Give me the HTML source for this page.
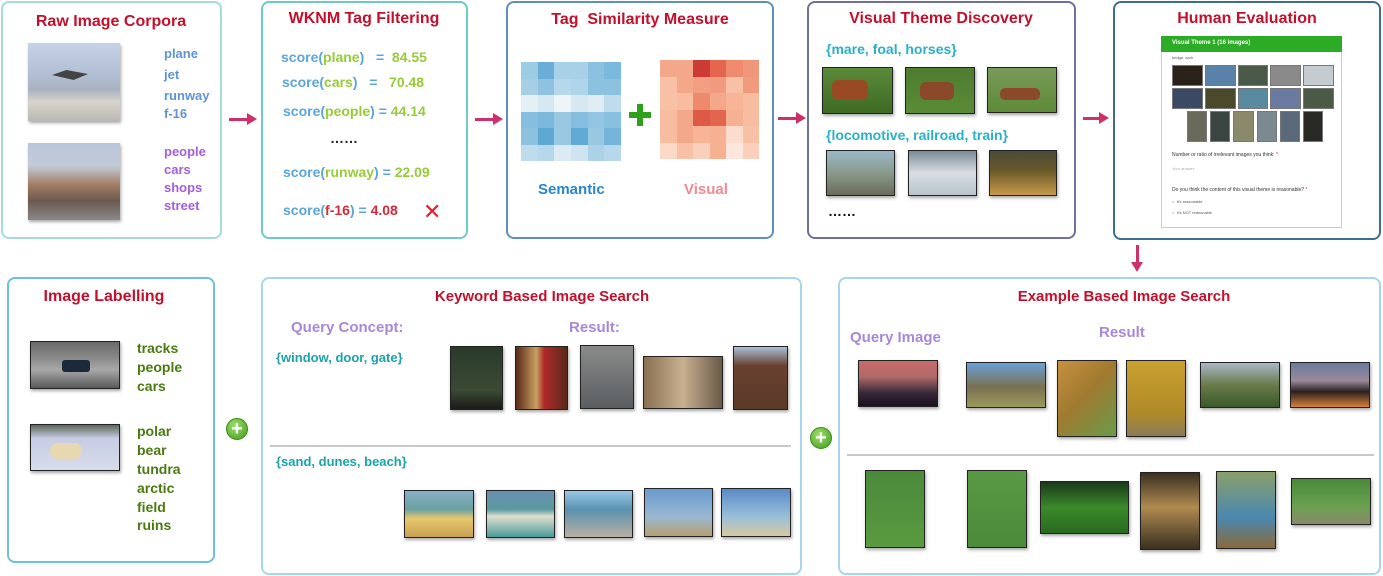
<!DOCTYPE html>
<html><head><meta charset="utf-8"><style>
*{margin:0;padding:0;box-sizing:border-box}
body{width:1383px;height:576px;background:#fff;position:relative;overflow:hidden;font-family:"Liberation Sans",sans-serif}
.a{position:absolute}
.box{position:absolute;border:2px solid #9dd6d0;border-radius:8px;background:#fff}
.t{position:absolute;color:#c4102c;font-weight:bold;font-size:16px;white-space:nowrap;transform:translateX(-50%)}
.tx{position:absolute;font-weight:bold;white-space:nowrap;font-size:13px}
.im{position:absolute;border:1px solid #222;box-shadow:1px 2px 3px rgba(0,0,0,.35)}
.grid{position:absolute;display:grid;grid-template-columns:repeat(6,1fr);grid-template-rows:repeat(6,1fr)}
.plus{position:absolute;width:22px;height:22px;border-radius:50%;background:radial-gradient(circle at 40% 35%,#9ee06a,#3f9a1c);color:#fff;font-weight:bold;font-size:20px;line-height:21px;text-align:center;border:1px solid #3b8a1a}
.arr{position:absolute;height:3px;background:#d0306a}
.arr:after{content:"";position:absolute;right:-8px;top:-5px;border-left:10px solid #d0306a;border-top:6.5px solid transparent;border-bottom:6.5px solid transparent}
.sb{color:#5aa5dc}.sg{color:#96cc38}
</style></head><body>

<!-- top boxes -->
<div class="box" style="left:1px;top:1px;width:221px;height:238px;border-color:#a6dbd6"></div>
<div class="box" style="left:261px;top:1px;width:207px;height:238px;border-color:#6fcac5"></div>
<div class="box" style="left:506px;top:1px;width:268px;height:238px;border-color:#5f8fc0"></div>
<div class="box" style="left:807px;top:1px;width:269px;height:238px;border-color:#6f6f9f"></div>
<div class="box" style="left:1113px;top:1px;width:268px;height:239px;border-color:#3f6d90"></div>

<div class="t" style="left:111px;top:13px">Raw Image Corpora</div>
<div class="t" style="left:364px;top:10px">WKNM Tag Filtering</div>
<div class="t" style="left:640px;top:11px">Tag &nbsp;Similarity Measure</div>
<div class="t" style="left:941px;top:10px">Visual Theme Discovery</div>
<div class="t" style="left:1247px;top:10px">Human Evaluation</div>

<!-- box1 -->
<div class="im" style="left:28px;top:43px;width:92px;height:78px;border:none;background:linear-gradient(#c6d2e6 0%,#b2bfd4 40%,#a9b2c0 60%,#d6d4cc 75%,#bab8b2 100%)"></div>
<div class="a" style="left:52px;top:70px;width:36px;height:10px;background:#444;clip-path:polygon(0 50%,40% 0,100% 40%,60% 100%)"></div>
<div class="im" style="left:28px;top:143px;width:92px;height:77px;border:none;background:linear-gradient(#b8c6dc 0%,#c2cad6 30%,#a27a62 55%,#6b5a50 75%,#888 100%)"></div>
<div class="tx" style="left:164px;top:46px;color:#5e93d8">plane</div>
<div class="tx" style="left:164px;top:67px;color:#5e93d8">jet</div>
<div class="tx" style="left:164px;top:88px;color:#5e93d8">runway</div>
<div class="tx" style="left:164px;top:106px;color:#5e93d8">f-16</div>
<div class="tx" style="left:164px;top:144px;color:#a25ee0">people</div>
<div class="tx" style="left:164px;top:162px;color:#a25ee0">cars</div>
<div class="tx" style="left:164px;top:180px;color:#a25ee0">shops</div>
<div class="tx" style="left:164px;top:198px;color:#a25ee0">street</div>

<div class="arr" style="left:229px;top:118px;width:20px"></div>
<div class="arr" style="left:475px;top:118px;width:20px"></div>
<div class="arr" style="left:778px;top:117px;width:20px"></div>
<div class="arr" style="left:1083px;top:117px;width:18px"></div>
<div class="a" style="left:1136px;top:245px;width:3px;height:20px;background:#d0306a"></div>
<div class="a" style="left:1131px;top:262px;border-top:10px solid #d0306a;border-left:6.5px solid transparent;border-right:6.5px solid transparent"></div>

<!-- box2 -->
<div class="tx" style="left:281px;top:49px;font-size:14px"><span class="sb">score(</span><span class="sg">plane</span><span class="sb">)</span> &nbsp; <span class="sb">=</span> &nbsp;<span class="sg">84.55</span></div>
<div class="tx" style="left:282px;top:74px;font-size:14px"><span class="sb">score(</span><span class="sg">cars</span><span class="sb">)</span> &nbsp; <span class="sb">=</span> &nbsp; <span class="sg">70.48</span></div>
<div class="tx" style="left:283px;top:103px;font-size:14px"><span class="sb">score(</span><span class="sg">people</span><span class="sb">)</span> <span class="sb">=</span> <span class="sg">44.14</span></div>
<div class="tx" style="left:330px;top:130px;font-size:14px;color:#222">……</div>
<div class="tx" style="left:283px;top:164px;font-size:14px"><span class="sb">score(</span><span class="sg">runway</span><span class="sb">)</span> <span class="sb">=</span> <span class="sg">22.09</span></div>
<div class="tx" style="left:283px;top:202px;font-size:14px"><span class="sb">score(</span><span style="color:#d42a3a">f-16</span><span class="sb">)</span> <span class="sb">=</span> <span style="color:#d42a3a">4.08</span></div>
<div class="tx" style="left:423px;top:199px;font-size:22px;color:#e41e2a;font-weight:normal">✕</div>

<!-- box3 -->
<div class="grid" style="left:521px;top:62px;width:100px;height:99px">
<div style="background:#9ccbe4"></div><div style="background:#6aaed8"></div><div style="background:#a8d0e6"></div><div style="background:#a8d0e6"></div><div style="background:#8ac0e0"></div><div style="background:#7ab8dc"></div>
<div style="background:#a6cfe6"></div><div style="background:#8ec2e0"></div><div style="background:#b6d8ea"></div><div style="background:#b0d4ea"></div><div style="background:#8cc2e0"></div><div style="background:#8cc2e0"></div>
<div style="background:#e4eff6"></div><div style="background:#d6e8f2"></div><div style="background:#eef5f9"></div><div style="background:#d6e8f2"></div><div style="background:#e0edf5"></div><div style="background:#bedcec"></div>
<div style="background:#86bedf"></div><div style="background:#7cb8dc"></div><div style="background:#98c8e2"></div><div style="background:#86bedf"></div><div style="background:#92c6e2"></div><div style="background:#88c0e0"></div>
<div style="background:#8cc2e0"></div><div style="background:#5ea8d4"></div><div style="background:#98c8e2"></div><div style="background:#62aad6"></div><div style="background:#98c8e2"></div><div style="background:#74b4da"></div>
<div style="background:#bedcec"></div><div style="background:#b6d8ea"></div><div style="background:#dceaf3"></div><div style="background:#cfe4f0"></div><div style="background:#acd2e8"></div><div style="background:#b6d8ea"></div>
</div>
<div class="a" style="left:629px;top:112px;width:22px;height:6px;background:#2ea01c"></div>
<div class="a" style="left:637px;top:104px;width:6px;height:22px;background:#2ea01c"></div>
<div class="grid" style="left:660px;top:60px;width:99px;height:99px">
<div style="background:#f4a88a"></div><div style="background:#f4a88a"></div><div style="background:#cc3a34"></div><div style="background:#e4664e"></div><div style="background:#f08a6e"></div><div style="background:#f0967a"></div>
<div style="background:#f8c0a4"></div><div style="background:#f4a88a"></div><div style="background:#f29e82"></div><div style="background:#f29a7e"></div><div style="background:#f8c0a4"></div><div style="background:#f29a7e"></div>
<div style="background:#f8c0a4"></div><div style="background:#f8bca0"></div><div style="background:#ee8a6c"></div><div style="background:#f4a88a"></div><div style="background:#f8b496"></div><div style="background:#f8bca0"></div>
<div style="background:#f8bca0"></div><div style="background:#f4a88a"></div><div style="background:#dc5a46"></div><div style="background:#e2664e"></div><div style="background:#f6b092"></div><div style="background:#f8bca0"></div>
<div style="background:#f8bca0"></div><div style="background:#f4a88a"></div><div style="background:#f8b496"></div><div style="background:#f6b092"></div><div style="background:#fcdccc"></div><div style="background:#f8c0a4"></div>
<div style="background:#fcd8c6"></div><div style="background:#f8c0a4"></div><div style="background:#fad0bc"></div><div style="background:#f6b092"></div><div style="background:#fde6dc"></div><div style="background:#fad0bc"></div>
</div>
<div class="tx" style="left:538px;top:181px;font-size:15px;color:#2a86cc">Semantic</div>
<div class="tx" style="left:684px;top:181px;font-size:15px;color:#f08a90">Visual</div>

<!-- box4 -->
<div class="tx" style="left:826px;top:41px;font-size:14px;color:#2ab0c8">{mare, foal, horses}</div>
<div class="im" style="left:822px;top:67px;width:71px;height:47px;background:linear-gradient(#5a8a3a,#3e6a24);"></div>
<div class="a" style="left:832px;top:80px;width:36px;height:20px;background:#9a4a22;border-radius:6px"></div>
<div class="im" style="left:905px;top:67px;width:70px;height:47px;background:linear-gradient(#4e7c30,#5a8c36)"></div>
<div class="a" style="left:920px;top:82px;width:34px;height:18px;background:#8a4a2a;border-radius:6px"></div>
<div class="im" style="left:987px;top:67px;width:70px;height:46px;background:linear-gradient(#7a9a5a,#5e8a38)"></div>
<div class="a" style="left:1000px;top:88px;width:40px;height:12px;background:#8a4a2a;border-radius:5px"></div>
<div class="tx" style="left:826px;top:127px;font-size:14px;color:#2ab0c8">{locomotive, railroad, train}</div>
<div class="im" style="left:826px;top:150px;width:69px;height:46px;background:linear-gradient(#9ab8c8,#8a9a8a 50%,#6a6a5a)"></div>
<div class="im" style="left:908px;top:150px;width:69px;height:46px;background:linear-gradient(#7a8a96,#d8dee4 50%,#b8c4cc)"></div>
<div class="im" style="left:989px;top:150px;width:68px;height:46px;background:linear-gradient(#4a4a3a,#6a5a2a 45%,#c89a4a)"></div>
<div class="tx" style="left:828px;top:203px;font-size:14px;color:#111">……</div>

<!-- box5 form -->
<div class="a" style="left:1161px;top:36px;width:181px;height:192px;border:1px solid #b8dca4;background:#fff"></div>
<div class="a" style="left:1161px;top:36px;width:181px;height:16px;background:#2cab24;color:#fff;font-size:6px;font-weight:bold;padding:4px 0 0 11px">Visual Theme 1 (16 images)</div>
<div class="a" style="left:1172px;top:55px;font-size:4px;color:#555">bridge, arch</div>
<div class="a" style="left:1172px;top:65px;width:162px;height:21px;display:flex;gap:2px">
<div style="flex:1;background:#2a2218;border:1px solid #777"></div><div style="flex:1;background:#5a82a8;border:1px solid #777"></div><div style="flex:1;background:#4a5a48;border:1px solid #777"></div><div style="flex:1;background:#8a8a8a;border:1px solid #777"></div><div style="flex:1;background:#c4ccd2;border:1px solid #777"></div></div>
<div class="a" style="left:1172px;top:88px;width:162px;height:21px;display:flex;gap:2px">
<div style="flex:1;background:#3a4a64;border:1px solid #777"></div><div style="flex:1;background:#4a4a2a;border:1px solid #777"></div><div style="flex:1;background:#5a8aa0;border:1px solid #777"></div><div style="flex:1;background:#6a7aa0;border:1px solid #777"></div><div style="flex:1;background:#4a5a44;border:1px solid #777"></div></div>
<div class="a" style="left:1187px;top:111px;width:136px;height:31px;display:flex;gap:3px">
<div style="flex:1;background:#6a6a5a;border:1px solid #777"></div><div style="flex:1;background:#3a4440;border:1px solid #777"></div><div style="flex:1;background:#8a8a6a;border:1px solid #777"></div><div style="flex:1;background:#7a8a90;border:1px solid #777"></div><div style="flex:1;background:#5a6a7a;border:1px solid #777"></div><div style="flex:1;background:#2a2a24;border:1px solid #777"></div></div>
<div class="a" style="left:1172px;top:152px;font-size:5px;color:#333">Number or ratio of irrelevant images you think: <span style="color:#d22">*</span></div>
<div class="a" style="left:1172px;top:166px;font-size:4px;color:#aaa">Your answer</div>
<div class="a" style="left:1172px;top:187px;font-size:5px;color:#333">Do you think the content of this visual theme is reasonable? <span style="color:#d22">*</span></div>
<div class="a" style="left:1172px;top:199px;font-size:4px;color:#555">○ &nbsp;It's reasonable</div>
<div class="a" style="left:1172px;top:210px;font-size:4px;color:#555">○ &nbsp;It's NOT reasonable</div>

<!-- bottom boxes -->
<div class="box" style="left:7px;top:277px;width:208px;height:286px;border-color:#6fc0dc"></div>
<div class="box" style="left:261px;top:277px;width:541px;height:298px;border-color:#a8d4ec"></div>
<div class="box" style="left:838px;top:277px;width:543px;height:298px;border-color:#a8d4ec"></div>

<div class="t" style="left:104px;top:288px;font-size:16px">Image Labelling</div>
<div class="im" style="left:30px;top:341px;width:90px;height:48px;background:linear-gradient(#6a6a6a,#8a8a8a 35%,#a8a8a8 60%,#5a5a5a)"></div>
<div class="a" style="left:62px;top:360px;width:28px;height:12px;background:#1a2a3a;border-radius:3px"></div>
<div class="tx" style="left:137px;top:340px;color:#4a7a10;font-size:14px">tracks</div>
<div class="tx" style="left:137px;top:359px;color:#4a7a10;font-size:14px">people</div>
<div class="tx" style="left:137px;top:378px;color:#4a7a10;font-size:14px">cars</div>
<div class="im" style="left:30px;top:424px;width:90px;height:47px;background:linear-gradient(#5a6a5a,#c8cce4 30%,#d8dcea)"></div>
<div class="a" style="left:50px;top:443px;width:32px;height:16px;background:#e8d8b0;border-radius:8px"></div>
<div class="tx" style="left:137px;top:423px;color:#4a7a10;font-size:14px">polar</div>
<div class="tx" style="left:137px;top:442px;color:#4a7a10;font-size:14px">bear</div>
<div class="tx" style="left:137px;top:461px;color:#4a7a10;font-size:14px">tundra</div>
<div class="tx" style="left:137px;top:480px;color:#4a7a10;font-size:14px">arctic</div>
<div class="tx" style="left:137px;top:499px;color:#4a7a10;font-size:14px">field</div>
<div class="tx" style="left:137px;top:517px;color:#4a7a10;font-size:14px">ruins</div>
<div class="plus" style="left:226px;top:418px">+</div>
<div class="plus" style="left:810px;top:427px">+</div>

<div class="t" style="left:542px;top:288px;font-size:15px">Keyword Based Image Search</div>
<div class="tx" style="left:291px;top:319px;font-size:15px;color:#a888d8">Query Concept:</div>
<div class="tx" style="left:569px;top:319px;font-size:15px;color:#a888d8">Result:</div>
<div class="tx" style="left:276px;top:350px;color:#1aa4a8;font-size:13px">{window, door, gate}</div>
<div class="im" style="left:450px;top:346px;width:53px;height:64px;background:linear-gradient(#2a3a2a,#3a4a34 70%,#1a1a1a)"></div>
<div class="im" style="left:515px;top:346px;width:53px;height:64px;background:linear-gradient(90deg,#5a2a1a,#c8a060 40%,#b02a2a 55%,#5a2a1a)"></div>
<div class="im" style="left:580px;top:345px;width:54px;height:64px;background:linear-gradient(#8a8a8a,#5a5e60)"></div>
<div class="im" style="left:643px;top:356px;width:80px;height:53px;background:linear-gradient(90deg,#8a7050,#c8b090 50%,#6a5a4a)"></div>
<div class="im" style="left:733px;top:346px;width:55px;height:64px;background:linear-gradient(#a8c0d8,#6a4030 30%,#5a3a2a)"></div>
<div class="a" style="left:270px;top:445px;width:521px;height:2px;background:#c8c8c8"></div>
<div class="tx" style="left:276px;top:454px;color:#1aa4a8;font-size:13px">{sand, dunes, beach}</div>
<div class="im" style="left:404px;top:490px;width:70px;height:48px;background:linear-gradient(#8ab0c8,#6aa0a0 40%,#e8c870 60%,#c8a050)"></div>
<div class="im" style="left:486px;top:490px;width:69px;height:48px;background:linear-gradient(#6a90b0,#5a9aa0 40%,#e0e0d0 55%,#4a9a98)"></div>
<div class="im" style="left:564px;top:490px;width:69px;height:48px;background:linear-gradient(#9ac8e8,#5a90b0 40%,#b8b0a0)"></div>
<div class="im" style="left:644px;top:488px;width:69px;height:49px;background:linear-gradient(#6a9ad0,#9ab8d0 60%,#b8a070)"></div>
<div class="im" style="left:721px;top:488px;width:70px;height:49px;background:linear-gradient(#5a8ac8,#9ac0d8 60%,#d8c8a0)"></div>

<div class="t" style="left:1124px;top:288px;font-size:15px">Example Based Image Search</div>
<div class="tx" style="left:850px;top:329px;font-size:15px;color:#a888d8">Query Image</div>
<div class="tx" style="left:1099px;top:324px;font-size:15px;color:#a888d8">Result</div>
<div class="im" style="left:858px;top:360px;width:80px;height:47px;background:linear-gradient(#c86a6a,#b06a6a 35%,#3a2a3a 70%,#1a1020)"></div>
<div class="im" style="left:966px;top:362px;width:80px;height:46px;background:linear-gradient(#6aa0d8,#7a7050 55%,#9a9a5a)"></div>
<div class="im" style="left:1057px;top:360px;width:60px;height:77px;background:linear-gradient(135deg,#c89040,#a07a30 45%,#6a9a4a)"></div>
<div class="im" style="left:1126px;top:360px;width:60px;height:77px;background:linear-gradient(#c8a030,#b08a28 70%,#8a7a5a)"></div>
<div class="im" style="left:1200px;top:362px;width:80px;height:46px;background:linear-gradient(#a8b8c8,#6a7a4a 50%,#3a5a2a)"></div>
<div class="im" style="left:1290px;top:362px;width:80px;height:46px;background:linear-gradient(#6a7aa0,#9a8a9a 40%,#2a2020 65%,#d8803a)"></div>
<div class="a" style="left:847px;top:454px;width:527px;height:2px;background:#c8c8c8"></div>
<div class="im" style="left:865px;top:470px;width:60px;height:78px;background:linear-gradient(#4a8a3a,#5a9a40)"></div>
<div class="im" style="left:967px;top:470px;width:60px;height:78px;background:linear-gradient(#5a9a44,#4a8a3a)"></div>
<div class="im" style="left:1040px;top:481px;width:89px;height:53px;background:linear-gradient(#1a3a1a,#3a8a2a 50%,#2a6a20)"></div>
<div class="im" style="left:1140px;top:472px;width:60px;height:78px;background:linear-gradient(#3a3020,#b08a50 45%,#3a3020)"></div>
<div class="im" style="left:1216px;top:471px;width:60px;height:78px;background:linear-gradient(#8aa06a,#4a88b0 60%,#8a6a3a)"></div>
<div class="im" style="left:1291px;top:478px;width:80px;height:47px;background:linear-gradient(#4a8a3a,#6aa050 60%,#8a8a6a)"></div>

</body></html>
